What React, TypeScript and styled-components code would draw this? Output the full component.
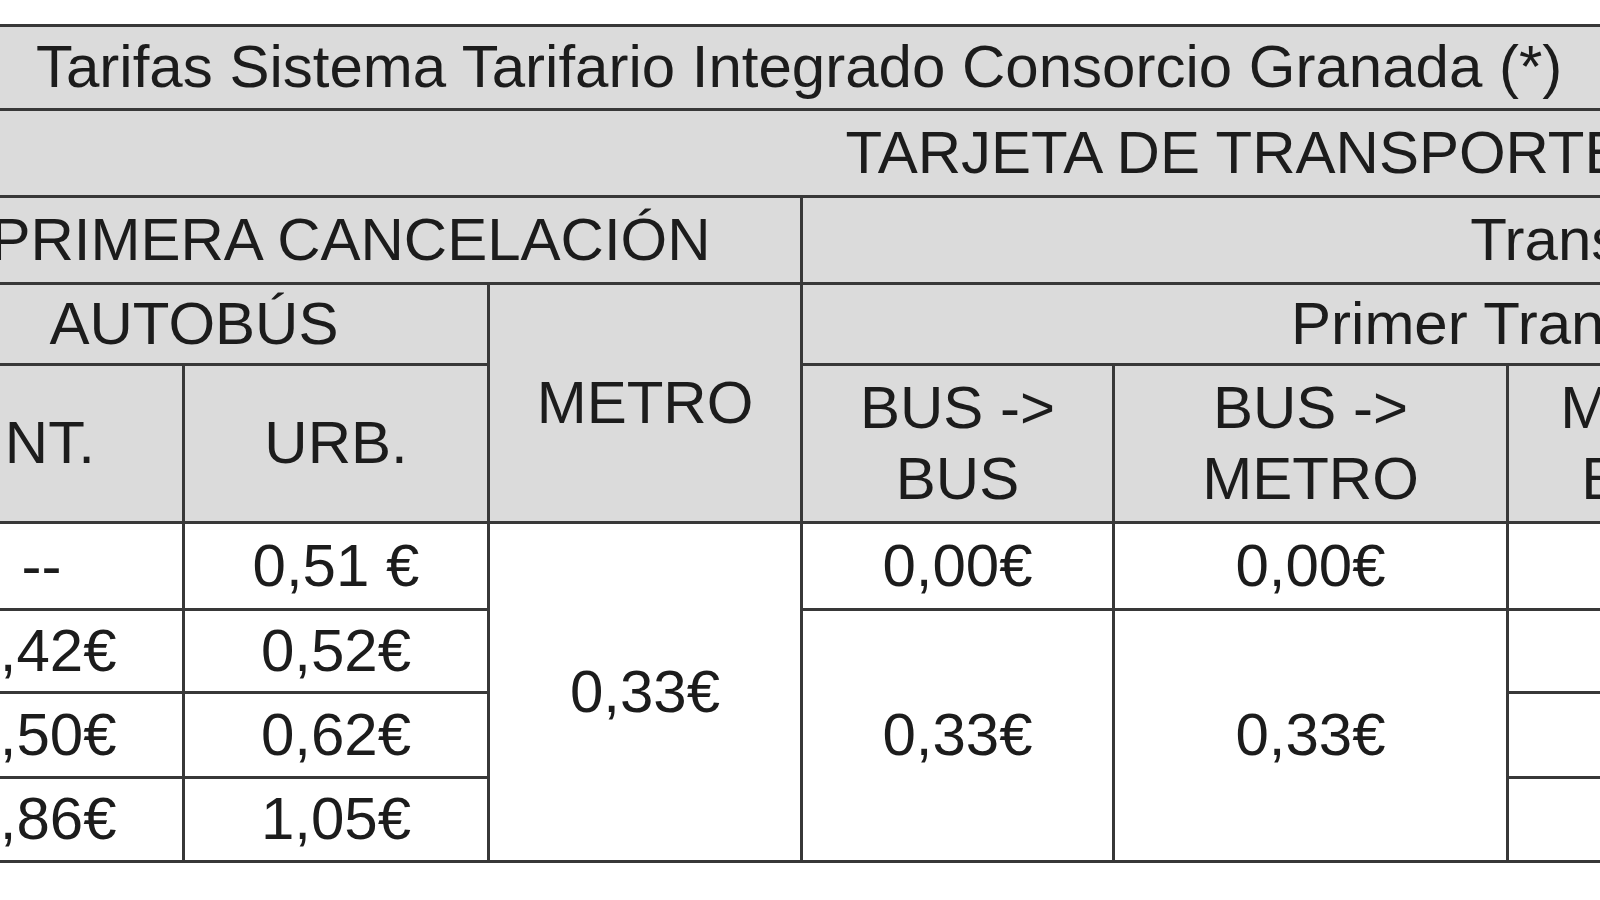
import styled, { createGlobalStyle } from "styled-components";

const GlobalStyle = createGlobalStyle`
  html, body {
    margin: 0;
    padding: 0;
    background: #ffffff;
    overflow: hidden;
  }
  body {
    font-family: "Liberation Sans", Arial, sans-serif;
  }
`;

const Page = styled.div`
  width: 1600px;
  height: 900px;
  overflow: hidden;
  padding-top: 24px;
  box-sizing: border-box;
`;

const Table = styled.table`
  margin-left: -102px;
  width: 2574px;
  border-collapse: collapse;
  table-layout: fixed;
  font-size: 60px;
  color: #1c1c1c;
`;

const Row = styled.tr<{ $h: number }>`
  height: ${(p) => p.$h}px;
`;

const Head = styled.th<{ $align?: "left" | "center"; $pad?: number }>`
  background: #dbdbdb;
  border: 3px solid #383838;
  font-weight: normal;
  text-align: ${(p) => p.$align ?? "center"};
  padding: 0 0 0 ${(p) => p.$pad ?? 0}px;
  line-height: 1.18;
  vertical-align: middle;
  white-space: ${(p) => (p.$align === "left" ? "nowrap" : "normal")};
  overflow: hidden;
`;

const Cell = styled.td`
  background: #ffffff;
  border: 3px solid #383838;
  text-align: center;
  vertical-align: middle;
  padding: 0;
  line-height: 1.18;
  white-space: nowrap;
`;

const widths = [284, 305, 313, 312, 394, 394, 376, 196];

const fares = [
  { int: "--", urb: "0,51 €" },
  { int: "0,42€", urb: "0,52€" },
  { int: "0,50€", urb: "0,62€" },
  { int: "0,86€", urb: "1,05€" },
];

const bodyHeights = [87, 83, 85, 84];

export default function App() {
  return (
    <Page>
      <GlobalStyle />
      <Table>
        <colgroup>
          {widths.map((w, i) => (
            <col key={i} style={{ width: w }} />
          ))}
        </colgroup>
        <thead>
          <Row $h={84}>
            <Head colSpan={8} $align="left" $pad={135}>
              Tarifas Sistema Tarifario Integrado Consorcio Granada (*)
            </Head>
          </Row>
          <Row $h={87}>
            <Head colSpan={8} $pad={97}>
              TARJETA DE TRANSPORTE
            </Head>
          </Row>
          <Row $h={87}>
            <Head colSpan={3}>PRIMERA CANCELACIÓN</Head>
            <Head colSpan={5}>Transbordos</Head>
          </Row>
          <Row $h={81}>
            <Head colSpan={2}>AUTOBÚS</Head>
            <Head rowSpan={2}>METRO</Head>
            <Head colSpan={4}>Primer Transbordo</Head>
            <Head rowSpan={2}>Segundo</Head>
          </Row>
          <Row $h={158}>
            <Head>INT.</Head>
            <Head>URB.</Head>
            <Head>BUS -&gt; BUS</Head>
            <Head>BUS -&gt; METRO</Head>
            <Head>METRO -&gt; BUS INT.</Head>
            <Head>METRO -&gt; BUS URB.</Head>
          </Row>
        </thead>
        <tbody>
          {fares.map((f, i) => (
            <Row key={i} $h={bodyHeights[i]}>
              <Cell>{f.int}</Cell>
              <Cell>{f.urb}</Cell>
              {i === 0 && <Cell rowSpan={4}>0,33€</Cell>}
              {i === 0 && <Cell>0,00€</Cell>}
              {i === 0 && <Cell>0,00€</Cell>}
              {i === 1 && <Cell rowSpan={3}>0,33€</Cell>}
              {i === 1 && <Cell rowSpan={3}>0,33€</Cell>}
              <Cell />
              <Cell />
              <Cell />
            </Row>
          ))}
        </tbody>
      </Table>
    </Page>
  );
}
